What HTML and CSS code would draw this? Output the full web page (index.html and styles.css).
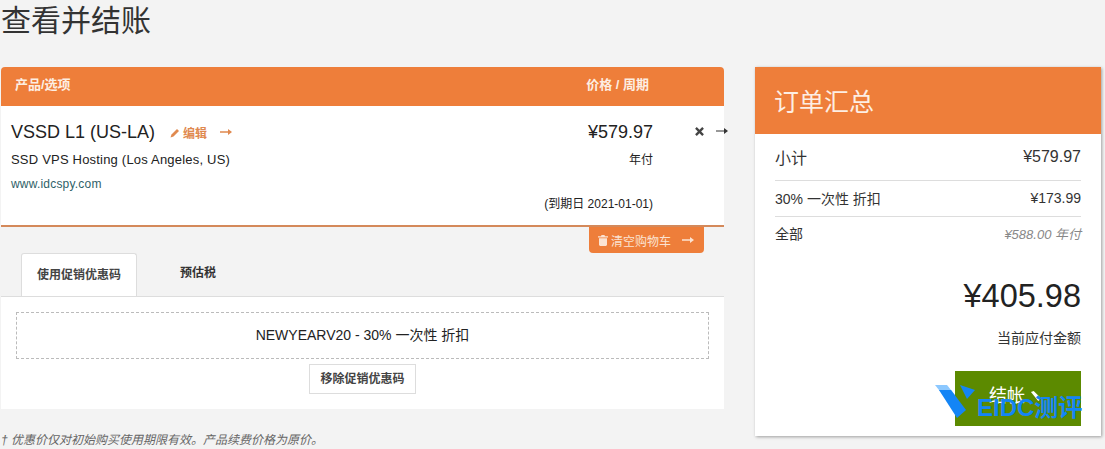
FILE: index.html
```html
<!DOCTYPE html>
<html>

    <head>
        <meta charset="UTF-8">
        <title>查看并结账</title>
        <link rel="stylesheet" href="styles.css">
    </head>

    <body>
        <h1 class="page-title">查看并结账</h1>

        <div class="checkout">
            <!-- Cart -->
            <div class="cart">
                <div class="cart-head">
                    <span>产品/选项</span>
                    <span class="cart-head-price">价格 / 周期</span>
                </div>

                <div class="cart-item">
                    <div class="item-info">
                        <div class="item-title">
                            <span class="item-name">VSSD L1 (US-LA)</span>
                            <a class="item-edit">
                                <svg class="icon-pencil" viewBox="0 0 10 10"><path d="M7 1l2 2-5.500 5.500-3 1 1-3z"/></svg>编辑
                            </a>
                            <svg class="arrow arrow-edit" viewBox="0 0 12 8"><path d="M0 3.200h8V1l4 3-4 3V4.800H0z"/></svg>
                        </div>
                        <div class="item-group">SSD VPS Hosting (Los Angeles, US)</div>
                        <div class="item-domain">www.idcspy.com</div>
                    </div>
                    <div class="item-price">
                        <div class="price-main">¥579.97</div>
                        <div class="price-cycle">年付</div>
                        <div class="price-renew">(到期日 2021-01-01)</div>
                    </div>
                    <div class="item-remove">
                        <svg class="icon-x" viewBox="0 0 10 10"><path d="M1 2.500L2.500 1 5 3.500 7.500 1 9 2.500 6.500 5 9 7.500 7.500 9 5 6.500 2.500 9 1 7.500 3.500 5z"/></svg>
                        <svg class="arrow arrow-remove" viewBox="0 0 12 8"><path d="M0 3.400h8V1l4 3-4 3V4.600H0z"/></svg>
                    </div>
                </div>

                <div class="cart-actions">
                    <a class="empty-btn">
                        <svg class="icon-trash" viewBox="0 0 10 11"><path d="M3.500 0h3l.5 1.200h3V2.400H0V1.200h3zM1 3.200h8V10l-1 1H2l-1-1z"/></svg>清空购物车
                        <svg class="arrow arrow-empty" viewBox="0 0 12 8"><path d="M0 3.200h8V1l4 3-4 3V4.800H0z"/></svg>
                    </a>
                </div>

                <div class="tabs">
                    <a class="tab tab-active">使用促销优惠码</a>
                    <a class="tab">预估税</a>
                </div>

                <div class="tab-panel">
                    <div class="promo-box">NEWYEARV20 - 30% 一次性 折扣</div>
                    <a class="promo-remove">移除促销优惠码</a>
                </div>

                <p class="cart-note">† 优惠价仅对初始购买使用期限有效。产品续费价格为原价。</p>
            </div>

            <!-- Order summary -->
            <div class="summary">
                <div class="summary-head">订单汇总</div>
                <div class="summary-body">
                    <div class="summary-row summary-subtotal">
                        <span>小计</span>
                        <span>¥579.97</span>
                    </div>
                    <div class="summary-row summary-discount">
                        <span>30% 一次性 折扣</span>
                        <span>¥173.99</span>
                    </div>
                    <div class="summary-row summary-last">
                        <span>全部</span>
                        <em>¥588.00 年付</em>
                    </div>
                    <div class="total-price">¥405.98</div>
                    <div class="total-label">当前应付金额</div>
                    <a class="checkout-btn">结帐
                        <svg class="icon-checkout" viewBox="0 0 12 12"><path d="M1 1l3-1 8 8-3 3z"/></svg>
                    </a>
                    <div class="watermark">
                        <svg class="watermark-logo" viewBox="0 0 40 34"><path d="M0 0h12l8 10H8z" fill="#8cc8ff"/><path d="M4 5h12l15 20-9 8z" fill="#1485f5"/><path d="M25 0l15 5-8 9z" fill="#1485f5"/></svg>
                        <span class="watermark-text">EIDC测评</span>
                    </div>
                </div>
            </div>
        </div>
    </body>

</html>
```

FILE: styles.css
```css
html {
    background-color: #f3f3f3;
}

body {
    margin: 0;
    height: 449px;
    overflow: hidden;
    font-family: "Liberation Sans", "Noto Sans CJK SC", sans-serif;
    font-size: 13px;
    color: #333;
}

.page-title {
    margin: 0;
    height: 67px;
    padding-left: 1px;
    font-size: 30px;
    font-weight: 400;
    line-height: 42px;
    color: #333;
}

.checkout {
    display: flex;
    align-items: flex-start;
    padding-left: 1px;
}

/* Cart */
.cart {
    flex: none;
    width: 723px;
    margin-right: 31px;
}

.cart-head {
    display: flex;
    justify-content: space-between;
    height: 39px;
    padding: 0 75px 0 14px;
    border-radius: 4px 4px 0 0;
    background: #ee7e3a;
    color: #fdeee3;
    font-size: 13px;
    font-weight: 700;
    line-height: 36px;
}

.cart-item {
    display: flex;
    height: 119px;
    border-bottom: 2px solid #d4895a;
    background: #fff;
}

.item-info {
    flex: 1;
    padding: 14px 0 0 10px;
}

.item-title {
    display: flex;
    align-items: center;
    height: 24px;
}

.item-name {
    font-size: 18px;
    color: #222;
}

.item-edit {
    margin-left: 15px;
    color: #e0894f;
    font-size: 12px;
    font-weight: 700;
}

.icon-pencil {
    width: 10px;
    height: 10px;
    margin-right: 3px;
    fill: #e0894f;
}

.arrow {
    flex: none;
    width: 12px;
    height: 8px;
}

.arrow-edit {
    margin-left: 13px;
    fill: #e0894f;
}

.item-group {
    margin-top: 8px;
    font-size: 13px;
    letter-spacing: 0.2px;
    color: #222;
}

.item-domain {
    margin-top: 10px;
    font-size: 12px;
    letter-spacing: 0.2px;
    color: #2f5f68;
}

.item-price {
    width: 200px;
    padding-top: 14px;
    text-align: right;
    color: #222;
}

.price-main {
    height: 24px;
    font-size: 18px;
    line-height: 24px;
}

.price-cycle {
    margin-top: 6px;
    font-size: 12px;
}

.price-renew {
    margin-top: 27px;
    font-size: 12px;
}

.item-remove {
    display: flex;
    align-items: center;
    gap: 11px;
    width: 71px;
    height: 37px;
    padding: 13px 0 0 41px;
    box-sizing: border-box;
}

.icon-x {
    flex: none;
    width: 11px;
    height: 11px;
    fill: #444;
}

.arrow-remove {
    fill: #333;
}

.cart-actions {
    display: flex;
    justify-content: flex-end;
    padding-right: 20px;
}

.empty-btn {
    display: flex;
    align-items: center;
    height: 26px;
    padding: 0 10px 0 9px;
    border-radius: 0 0 4px 4px;
    background: #ee7e3a;
    color: #fbe3d2;
    font-size: 12px;
}

.icon-trash {
    width: 10px;
    height: 11px;
    margin-right: 3px;
    fill: #fbe3d2;
}

.arrow-empty {
    margin-left: 11px;
    fill: #fbe3d2;
}

.tabs {
    display: flex;
    padding-left: 20px;
}

.tab {
    height: 43px;
    padding: 0 15px;
    color: #333;
    font-size: 12px;
    font-weight: 700;
    line-height: 43px;
    box-sizing: border-box;
}

.tab + .tab {
    padding: 0 43px;
    line-height: 41px;
}

.tab-active {
    border: 1px solid #ddd;
    border-bottom: 0;
    border-radius: 3px 3px 0 0;
    background: #fff;
    color: #444;
}

.tab-panel {
    height: 113px;
    padding: 15px 15px 0;
    border-top: 1px solid #ddd;
    background: #fff;
    text-align: center;
    box-sizing: border-box;
}

.promo-box {
    height: 47px;
    border: 1px dashed #bbb;
    color: #222;
    font-size: 14px;
    line-height: 45px;
    box-sizing: border-box;
}

.promo-remove {
    display: inline-block;
    margin-top: 5px;
    padding: 0 10px;
    border: 1px solid #ddd;
    color: #444;
    font-size: 12px;
    font-weight: 700;
    line-height: 28px;
}

.cart-note {
    margin: 21px 0 0;
    color: #666;
    font-size: 12px;
    font-style: italic;
}

/* Order summary */
.summary {
    flex: none;
    width: 346px;
    background: #fff;
    box-shadow: 1px 1px 3px rgba(0, 0, 0, 0.35);
}

.summary-head {
    height: 67px;
    padding-left: 19px;
    background: #ee7e3a;
    color: #fdeee3;
    font-size: 25px;
    line-height: 70px;
}

.summary-body {
    position: relative;
    height: 302px;
    padding: 0 20px;
}

.summary-row {
    display: flex;
    justify-content: space-between;
    align-items: center;
    height: 35px;
    border-bottom: 1px solid #ddd;
    color: #333;
    font-size: 14px;
}

.summary-subtotal {
    height: 46px;
    font-size: 16px;
}

.summary-discount {
    height: 33px;
    padding-bottom: 2px;
}

.summary-last {
    height: 32px;
    border-bottom: 0;
}

.summary-last em {
    color: #888;
    font-size: 13px;
}

.total-price {
    margin-top: 28px;
    color: #222;
    font-size: 32.500px;
    line-height: 38px;
    text-align: right;
}

.total-label {
    margin-top: 12px;
    color: #333;
    font-size: 14px;
    text-align: right;
}

.checkout-btn {
    display: block;
    width: 126px;
    height: 55px;
    margin: 24px 0 0 auto;
    padding-left: 34px;
    background: #5c8a00;
    color: #fff;
    font-size: 18px;
    line-height: 50px;
    box-sizing: border-box;
}

.icon-checkout {
    width: 11px;
    height: 11px;
    fill: #fff;
}

.watermark {
    position: absolute;
    left: 180px;
    top: 251px;
    display: flex;
}

.watermark-logo {
    width: 40px;
    height: 34px;
}

.watermark-text {
    margin: 9px 0 0 2px;
    color: #1485f5;
    font-size: 24px;
    font-weight: 700;
    line-height: 28px;
}
```
